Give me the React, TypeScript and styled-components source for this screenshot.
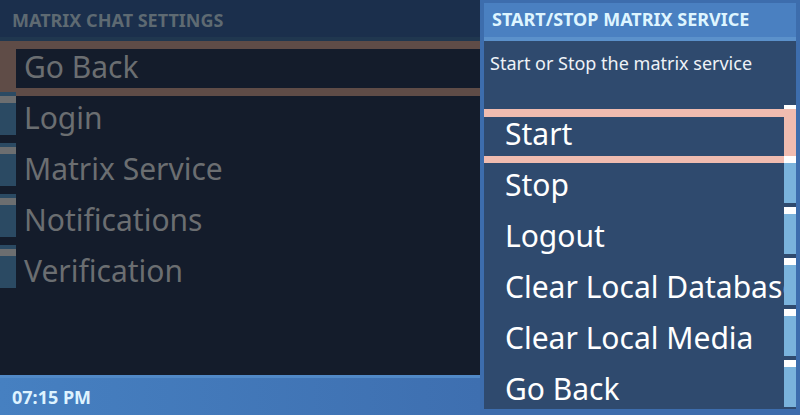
import React from "react";
import styled, { createGlobalStyle } from "styled-components";

const GlobalStyle = createGlobalStyle`
  html, body { margin: 0; padding: 0; background: #141c2b; }
  body { font-family: "Noto Sans", "Open Sans", sans-serif; }
  *, *::before, *::after { box-sizing: border-box; }
`;

const Screen = styled.div`
  display: grid;
  grid-template-columns: 480px 320px;
  width: 800px;
  height: 415px;
  overflow: hidden;
`;

const LeftPane = styled.div`
  display: flex;
  flex-direction: column;
  height: 415px;
  min-width: 0;
`;

const PageHeader = styled.div`
  height: 37px;
  flex: none;
  display: flex;
  align-items: center;
  padding: 3px 0 0 12px;
  background: #1b2f4c;
  color: #5e6a72;
  font-weight: 700;
  font-size: 18px;
`;

const HeaderEdge = styled.div`
  height: 4px;
  flex: none;
  background: #20374f;
`;

const NavList = styled.div`
  flex: 1;
  display: flex;
  flex-direction: column;
  background: #141c2b;
  overflow: hidden;
`;

const NavRow = styled.div<{ $focused?: boolean }>`
  position: relative;
  height: 51px;
  flex: none;
  display: flex;
  &::after {
    content: "";
    display: ${(p) => (p.$focused ? "block" : "none")};
    position: absolute;
    left: 0;
    right: 0;
    top: 0;
    height: 55px;
    border: 8px solid #5f4c47;
    border-left-width: 16px;
    border-right-width: 0;
    z-index: 1;
    pointer-events: none;
  }
`;

const NavMark = styled.div`
  position: relative;
  z-index: 1;
  width: 16px;
  height: 43px;
  flex: none;
  background: linear-gradient(#2b4a63 0 4px, #6c6e70 4px 11px, #2b4a63 11px);
`;

const NavLabel = styled.div`
  flex: 1;
  min-width: 0;
  padding-left: 8px;
  font-size: 30px;
  line-height: 51px;
  color: #6b6e71;
  white-space: nowrap;
  overflow: hidden;
`;

const Footer = styled.div`
  height: 40px;
  flex: none;
  display: flex;
  align-items: center;
  padding: 0 12px;
  border-top: 3px solid #5189c7;
  background: linear-gradient(90deg, #4680c1 0%, #3e6fb0 100%);
  color: #def3ff;
  font-weight: 700;
  font-size: 18px;
`;

const Modal = styled.div`
  display: flex;
  flex-direction: column;
  height: 415px;
  border: 4px solid #3d6dad;
  border-top-width: 3px;
  border-bottom-width: 6px;
  background: #2f4a6e;
  overflow: hidden;
`;

const ModalTitle = styled.div`
  height: 38px;
  flex: none;
  display: flex;
  align-items: center;
  padding: 0 8px 2px;
  background: #4a80c1;
  border-bottom: 4px solid #5b91cb;
  color: #def5ff;
  font-weight: 700;
  font-size: 18px;
`;

const ModalText = styled.div`
  height: 64px;
  flex: none;
  padding: 10px 6px 0;
  color: #eef2f7;
  font-size: 18px;
  line-height: 24px;
`;

const MenuList = styled.div`
  flex: 1;
  display: flex;
  flex-direction: column;
  overflow: hidden;
`;

const MenuRow = styled.div<{ $focused?: boolean }>`
  position: relative;
  height: 51px;
  flex: none;
  display: flex;
  &::after {
    content: "";
    display: ${(p) => (p.$focused ? "block" : "none")};
    position: absolute;
    left: 0;
    right: 0;
    top: 4px;
    height: 54px;
    border: 8px solid #f0bcb0;
    border-bottom-width: 7px;
    border-left-width: 0;
    border-right-width: 12px;
    z-index: 1;
    pointer-events: none;
  }
`;

const MenuLabel = styled.div`
  flex: 1;
  min-width: 0;
  padding: 6px 0 0 21px;
  font-size: 30px;
  line-height: 45px;
  color: #ffffff;
  white-space: nowrap;
  overflow: hidden;
`;

const MenuMark = styled.div`
  position: relative;
  z-index: 1;
  width: 12px;
  height: 47px;
  flex: none;
  background: linear-gradient(#ffffff 0 7px, #7ab3dc 7px);
`;

const navItems = ["Go Back", "Login", "Matrix Service", "Notifications", "Verification"];
const menuItems = ["Start", "Stop", "Logout", "Clear Local Database", "Clear Local Media", "Go Back"];

export default function App() {
  return (
    <>
      <GlobalStyle />
      <Screen>
        <LeftPane>
          <PageHeader>MATRIX CHAT SETTINGS</PageHeader>
          <HeaderEdge />
          <NavList>
            {navItems.map((label, i) => (
              <NavRow key={label} $focused={i === 0}>
                <NavMark />
                <NavLabel>{label}</NavLabel>
              </NavRow>
            ))}
          </NavList>
          <Footer>07:15 PM</Footer>
        </LeftPane>
        <Modal>
          <ModalTitle>START/STOP MATRIX SERVICE</ModalTitle>
          <ModalText>Start or Stop the matrix service</ModalText>
          <MenuList>
            {menuItems.map((label, i) => (
              <MenuRow key={label} $focused={i === 0}>
                <MenuLabel>{label}</MenuLabel>
                <MenuMark />
              </MenuRow>
            ))}
          </MenuList>
        </Modal>
      </Screen>
    </>
  );
}
